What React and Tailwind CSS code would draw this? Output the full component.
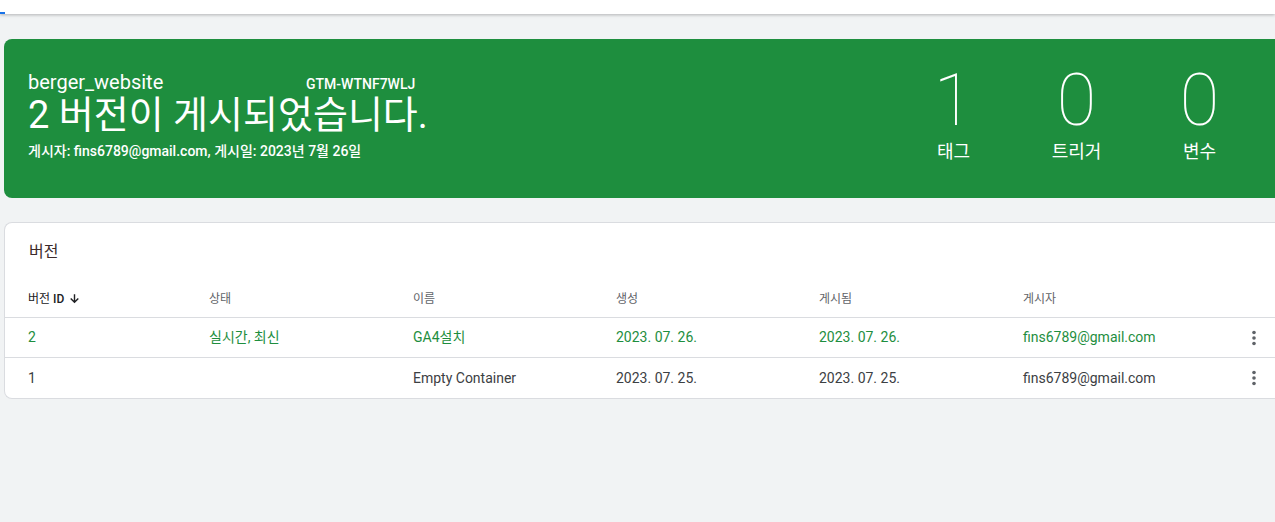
import React from 'react';

const FONT = { fontFamily: 'Roboto, "Noto Sans CJK KR", sans-serif' };

const rows = [
  { id: '2', status: '실시간, 최신', name: 'GA4설치', created: '2023. 07. 26.', published: '2023. 07. 26.', by: 'fins6789@gmail.com', live: true },
  { id: '1', status: '', name: 'Empty Container', created: '2023. 07. 25.', published: '2023. 07. 25.', by: 'fins6789@gmail.com', live: false },
];

const Kebab = () => (
  <svg width="4" height="16" viewBox="0 0 4 16" className="text-[#5f6368]">
    <circle cx="2" cy="2.5" r="1.8" fill="currentColor" />
    <circle cx="2" cy="8" r="1.8" fill="currentColor" />
    <circle cx="2" cy="13.5" r="1.8" fill="currentColor" />
  </svg>
);

const Stat = ({ value, label }) => (
  <div className="w-[123px] flex flex-col items-center">
    <span className="text-[72px] leading-[72px] font-thin">{value}</span>
    <span className="text-[18px] leading-[24px] mt-[3px]">{label}</span>
  </div>
);

export default function App() {
  return (
    <div className="min-h-[522px] bg-[#f1f3f4] overflow-hidden" style={FONT}>
      {/* top bar */}
      <div className="h-[14px] bg-white shadow-[0_1px_3px_rgba(60,64,67,0.35)] relative">
        <div className="absolute left-0 bottom-0 w-[5px] h-[2px] bg-[#1a73e8]" />
      </div>

      <div className="pl-[4px] pt-[25px] w-[1300px]">
        {/* summary card */}
        <div className="bg-[#1e8e3e] text-white rounded-l-[8px] h-[159px] flex">
          <div className="flex-1 pl-[24px] pt-[31px]">
            <div className="flex items-baseline">
              <span className="text-[20px] leading-[24px] w-[278px]">berger_website</span>
              <span className="text-[14px] font-medium">GTM-WTNF7WLJ</span>
            </div>
            <h1 className="text-[38px] leading-[40px] font-normal">2 버전이 게시되었습니다.</h1>
            <p className="text-[14px] leading-[20px] font-medium mt-[6px]">게시자: fins6789@gmail.com, 게시일: 2023년 7월 26일</p>
          </div>
          <div className="flex pt-[26px] pr-[39px]">
            <Stat value="1" label="태그" />
            <Stat value="0" label="트리거" />
            <Stat value="0" label="변수" />
          </div>
        </div>

        {/* versions table */}
        <div className="mt-[24px] bg-white rounded-l-[8px] border border-r-0 border-[#dadce0]">
          <div className="px-[24px] pt-[17px] h-[57px] text-[16px] leading-[24px] text-[#3c2a2a]">버전</div>
          <div className="flex items-center h-[38px] border-b border-[#dadce0] text-[12px] text-[#5f6368]">
            <div className="w-[204px] pl-[23px] flex items-center gap-[4px] text-[#202124]">
              <span>버전 <span className="font-medium">ID</span></span>
              <svg width="13" height="13" viewBox="0 0 24 24" fill="none" stroke="currentColor" strokeWidth="2.6">
                <path d="M12 4v15M5 12l7 7 7-7" />
              </svg>
            </div>
            <div className="w-[204px]">상태</div>
            <div className="w-[203px]">이름</div>
            <div className="w-[203px]">생성</div>
            <div className="w-[204px]">게시됨</div>
            <div className="w-[220px]">게시자</div>
          </div>
          {rows.map((r, i) => (
            <div
              key={r.id}
              className={`flex items-center h-[40px] text-[14px] ${i === 0 ? 'border-b border-[#dadce0] text-[#1e8e3e]' : 'text-[#3c4043]'}`}
            >
              <div className="w-[204px] pl-[23px]">{r.id}</div>
              <div className="w-[204px]">{r.status}</div>
              <div className="w-[203px]">{r.name}</div>
              <div className="w-[203px]">{r.created}</div>
              <div className="w-[204px]">{r.published}</div>
              <div className="w-[229px]">{r.by}</div>
              <div className="flex items-center"><Kebab /></div>
            </div>
          ))}
        </div>
      </div>
    </div>
  );
}
